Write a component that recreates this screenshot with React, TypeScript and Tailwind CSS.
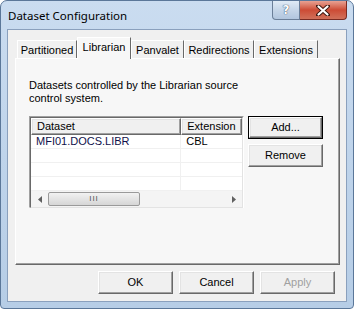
import type { ReactNode } from "react";

const tabs = ["Partitioned", "Librarian", "Panvalet", "Redirections", "Extensions"];
const tabWidths = [60, 54, 53, 70, 64];

const Raised = ({ children, className = "" }: { children: ReactNode; className?: string }) => (
  <div
    className={`flex items-center justify-center border border-t-white border-l-white border-r-[#696969] border-b-[#696969] bg-[#f0f0f0] shadow-[inset_-1px_-1px_0_#a0a0a0,inset_1px_1px_0_#e3e3e3] ${className}`}
  >
    {children}
  </div>
);

const DialogButton = ({ label, disabled, focused }: { label: string; disabled?: boolean; focused?: boolean }) => (
  <div className={`h-[23px] w-[75px] ${focused ? "border border-[#000]" : ""}`}>
    <Raised className={`h-full w-full ${disabled ? "text-[#a0a0a0]" : "text-black"}`}>{label}</Raised>
  </div>
);

const ListView = () => (
  <div className="flex h-[92px] w-[215px] flex-col border border-t-[#a0a0a0] border-l-[#a0a0a0] border-r-white border-b-white">
    <div className="flex flex-1 flex-col border border-t-[#696969] border-l-[#696969] border-r-[#e3e3e3] border-b-[#e3e3e3] bg-white">
      <div className="flex h-[17px]">
        <Raised className="w-[151px] !justify-start pl-[5px]">Dataset</Raised>
        <Raised className="w-[61px] !justify-start pl-[5px]">Extension</Raised>
        <div className="flex-1 bg-white" />
      </div>
      {["MFI01.DOCS.LIBR", "", "", ""].map((name, i) => (
        <div key={i} className="flex h-[14px] border-b border-[#f0f0f0]">
          <div className="w-[151px] border-r border-[#f0f0f0] pl-[5px] leading-[13px] text-[#10104a]">{name}</div>
          <div className="w-[61px] pl-[5px] leading-[13px]">{name ? "CBL" : ""}</div>
        </div>
      ))}
      <div className="mt-auto flex h-[16px] items-center bg-[#f4f4f4]">
        <div className="flex w-[17px] justify-center">
          <svg width="4" height="7" viewBox="0 0 4 7">
            <path d="M4 0 L0 3.5 L4 7 Z" fill="#606060" />
          </svg>
        </div>
        <div className="h-[14px] w-[92px] rounded-[2px] border border-[#9a9a9a] bg-gradient-to-b from-[#f2f2f2] to-[#d6d6d6] text-center text-[8px] leading-[12px] tracking-[1px] text-[#555]">
          III
        </div>
        <div className="flex-1" />
        <div className="flex w-[17px] justify-center">
          <svg width="4" height="7" viewBox="0 0 4 7">
            <path d="M0 0 L4 3.5 L0 7 Z" fill="#606060" />
          </svg>
        </div>
      </div>
    </div>
  </div>
);

export default function App() {
  return (
    <div className="relative flex h-[309px] w-[354px] flex-col overflow-hidden rounded-t-[7px] rounded-b-[4px] border border-[#5b7799] bg-gradient-to-b from-[#cadcf0] via-[#bfd4eb] to-[#b6cde6] font-['Liberation_Sans',Arial,sans-serif] text-[11px] text-black">
      {/* title bar */}
      <div className="flex h-[28px] items-start">
        <div className="pl-[7px] pt-[7px] font-['Noto_Sans',sans-serif] text-[11.5px] leading-[16px] text-black">
          Dataset Configuration
        </div>
        <div className="ml-auto mr-[6px] flex">
          <div className="flex h-[19px] w-[28px] items-center justify-center rounded-bl-[4px] border border-t-0 border-[#6b7f98] bg-gradient-to-b from-[#e0ebf6] via-[#c6d6e8] to-[#b2c6de] font-['DejaVu_Sans',sans-serif] text-[12px] font-bold text-white [text-shadow:0_0_1px_#384b66,0_0_1px_#384b66]">
            ?
          </div>
          <div className="flex h-[19px] w-[47px] items-center justify-center rounded-br-[4px] border border-l-0 border-t-0 border-[#7a2b22] bg-gradient-to-b from-[#e7a193] via-[#cc4b35] to-[#d0705a]">
            <svg width="14" height="11" viewBox="0 0 14 11">
              <path d="M2 1 L12 10 M12 1 L2 10" stroke="#3b1710" strokeWidth="4" strokeLinecap="round" />
              <path d="M2.5 1.5 L11.5 9.5 M11.5 1.5 L2.5 9.5" stroke="#fff" strokeWidth="2.2" strokeLinecap="round" />
            </svg>
          </div>
        </div>
      </div>

      {/* client area */}
      <div className="ml-[6px] flex h-[273px] w-[340px] flex-col border border-[#8aa0bd] bg-[#f0f0f0]">
        {/* tabs */}
        <div className="flex h-[28px] items-end pl-[9px]">
          {tabs.map((t, i) => {
            const active = i === 1;
            return (
              <div
                key={t}
                style={{ width: tabWidths[i] }}
                className={`flex items-center justify-center border border-b-0 border-t-white border-l-white border-r-[#696969] ${
                  active ? "relative z-10 -mb-px h-[22px] bg-[#f7f7f7] pb-[2px]" : "h-[18px] bg-[#f0f0f0] pt-[1px]"
                }`}
              >
                {t}
              </div>
            );
          })}
        </div>

        {/* panel */}
        <div className="ml-[7px] flex h-[207px] w-[325px] flex-col border border-t-white border-l-white border-r-[#696969] border-b-[#696969] bg-[#f7f7f7] pl-[13px] pt-[20px] shadow-[inset_-1px_-1px_0_#a0a0a0]">
          <div className="leading-[13px]">
            Datasets controlled by the Librarian source
            <br />
            control system.
          </div>
          <div className="mt-[11px] flex items-start gap-[4px]">
            <ListView />
            <div className="flex flex-col gap-[5px]">
              <DialogButton label="Add..." focused />
              <DialogButton label="Remove" />
            </div>
          </div>
        </div>

        {/* dialog buttons */}
        <div className="mt-[6px] flex justify-end gap-[6px] pr-[11px]">
          <DialogButton label="OK" />
          <DialogButton label="Cancel" />
          <DialogButton label="Apply" disabled />
        </div>
      </div>
    </div>
  );
}
